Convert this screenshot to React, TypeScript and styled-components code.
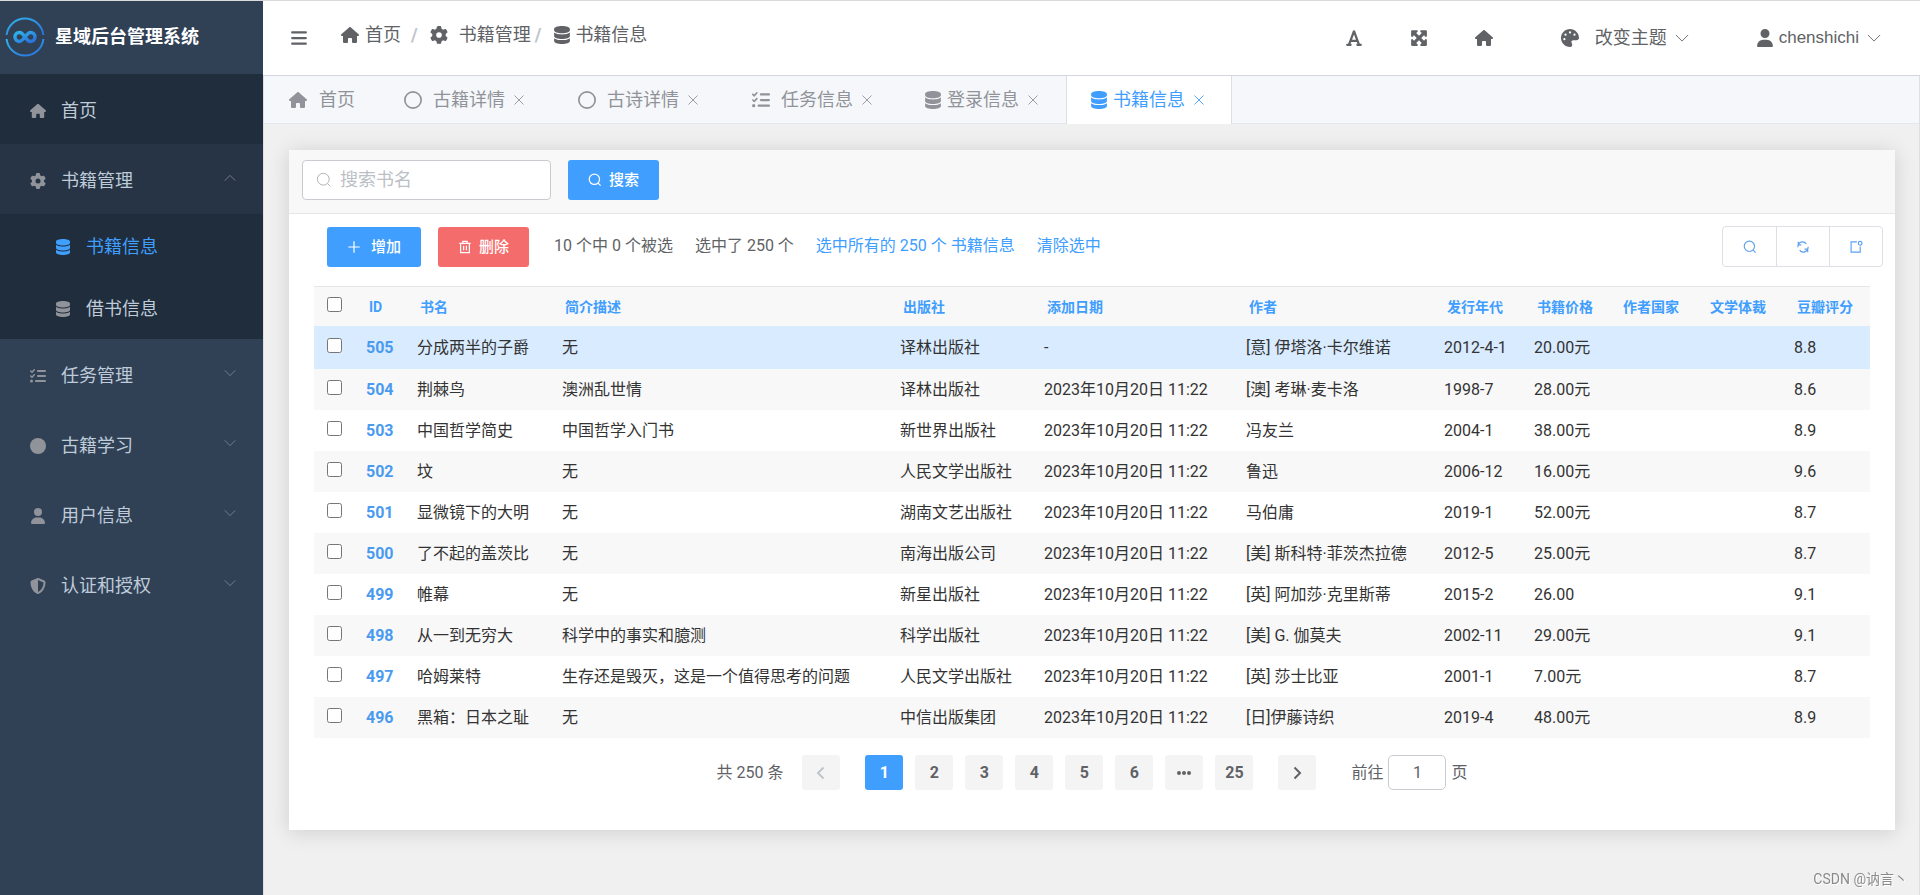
import React from "react";
import styled, { createGlobalStyle, css } from "styled-components";
import {
  FaHouse, FaGear, FaDatabase, FaListCheck, FaCircle, FaRegCircle, FaUser,
  FaShieldHalved, FaPalette, FaFont, FaMaximize, FaBars,
} from "react-icons/fa6";

const color = {
  primary: "#409eff",
  danger: "#f56c6c",
  text: "#606266",
  muted: "#909399",
  border: "#dcdfe6",
  line: "#e4e7ed",
};

const GlobalStyle = createGlobalStyle`
  *, *::before, *::after { box-sizing: border-box; }
  body {
    margin: 0;
    background: #f0f0f0;
    color: ${color.text};
    font-family: Roboto, "Noto Sans CJK SC", sans-serif;
    font-size: 16px;
    line-height: 24px;
  }
  button, input { font: inherit; color: inherit; margin: 0; }
  button { border: 0; background: none; padding: 0; cursor: pointer; }
  a { color: inherit; text-decoration: none; }
  ul, ol { list-style: none; margin: 0; padding: 0; }
`;

/* ---------- line icons ---------- */

const LineSvg = styled.svg<{ $size?: number }>`
  flex: none;
  width: ${(p) => p.$size ?? 14}px;
  height: ${(p) => p.$size ?? 14}px;
  fill: none;
  stroke: currentColor;
`;

const ICON_PATHS = {
  search: "M13.2 7.2a5.9 5.9 0 1 1-11.8 0a5.9 5.9 0 1 1 11.8 0zM11.6 11.6l2.8 2.8",
  plus: "M8 1.5v13M1.5 8h13",
  trash: "M1.5 3.8h13M5.5 3.6V1.5h5v2.1M3 3.8v10.7h10V3.8M6.4 6.6v5M9.6 6.6v5",
  refresh: "M2.2 8.2V7.6A5.3 5.3 0 0 1 11.8 4.4M13.8 7.8v.6A5.3 5.3 0 0 1 4.2 11.6M2.6 1.9v3.6h3.6M13.4 14.1v-3.6H9.8",
  share: "M9 2.2H2.4v11.6h10.4V7.4M14.8 3.7a2.1 2.1 0 1 1-4.2 0a2.1 2.1 0 1 1 4.2 0z",
  close: "M2 2l12 12M14 2L2 14",
  down: "M1 4.5l7 7l7-7",
  up: "M1 11.5l7-7l7 7",
  left: "M10.5 2.5L5 8l5.5 5.5",
  right: "M5.5 2.5L11 8l-5.5 5.5",
};

type LineIconProps = { name: keyof typeof ICON_PATHS; size?: number; weight?: number };
const LineIcon = ({ name, size, weight = 1 }: LineIconProps) => (
  <LineSvg viewBox="0 0 16 16" $size={size} strokeWidth={weight} aria-hidden="true">
    <path d={ICON_PATHS[name]} />
  </LineSvg>
);

const Glyph = styled.span<{ $width?: number; $size?: number }>`
  display: inline-flex;
  flex: none;
  justify-content: center;
  width: ${(p) => (p.$width ? `${p.$width}px` : "auto")};
  font-size: ${(p) => p.$size ?? 18}px;
  svg { width: auto; height: 1em; }
`;

/* ---------- shell ---------- */

const Shell = styled.div`
  display: flex;
  min-height: 100vh;
  border-top: 1px solid #d9dadc;
`;

const Sidebar = styled.aside`
  flex: none;
  width: 263px;
  background: #304156;
  color: #bfcbd9;
  font-size: 18px;
`;

const Brand = styled.div`
  display: flex;
  align-items: center;
  gap: 10px;
  height: 73px;
  padding: 0 0 2px 5px;
  color: #fff;
  font-weight: 700;
`;

const Logo = () => (
  <svg width="40" height="40" viewBox="0 0 40 40" fill="none" aria-hidden="true">
    <defs>
      <linearGradient id="brand" x1="0" y1="0" x2="1" y2="1">
        <stop offset="0" stopColor="#2fb4ea" />
        <stop offset="1" stopColor="#2b6fdc" />
      </linearGradient>
    </defs>
    <g stroke="url(#brand)">
      <path d="M1.6 18A18.5 18.5 0 0 1 38.400 18" strokeWidth="2" />
      <path d="M1.6 22A18.5 18.5 0 0 0 38.400 22" strokeWidth="2" />
      <path
        d="M20 20c-2-3-3.500-4.500-5.500-4.500a4.500 4.500 0 0 0 0 9c4 0 7-9 11-9a4.500 4.500 0 0 1 0 9c-2 0-3.500-1.500-5.500-4.500"
        strokeWidth="3.4"
        strokeLinecap="round"
      />
    </g>
  </svg>
);

const MenuLink = styled.a<{ $tone?: "dark" | "open" }>`
  display: flex;
  align-items: center;
  gap: 12px;
  height: 70px;
  padding: 3px 27px 0 26px;
  background: ${(p) => (p.$tone === "dark" ? "#1f2d3d" : p.$tone === "open" ? "#263445" : "none")};
`;

const MenuIcon = styled(Glyph)`
  color: ${color.muted};
`;

const MenuArrow = styled.span`
  display: flex;
  margin-left: auto;
  padding-bottom: 6px;
  color: ${color.muted};
`;

const SubMenu = styled.ul`
  padding-bottom: 1px;
  background: #1f2d3d;
`;

const SubLink = styled.a<{ $active?: boolean }>`
  display: flex;
  align-items: center;
  gap: 12px;
  height: 62px;
  padding: 4px 0 0 51px;
  color: ${(p) => (p.$active ? color.primary : "inherit")};
  ${MenuIcon} { color: ${(p) => (p.$active ? color.primary : color.muted)}; }
`;

const Main = styled.div`
  display: flex;
  flex: 1;
  flex-direction: column;
  min-width: 0;
`;

const TopBar = styled.header`
  display: flex;
  align-items: center;
  height: 75px;
  padding: 0 39px 0 27px;
  border-bottom: 1px solid #d3d6de;
  background: #fff;
  font-size: 18px;
`;

const Crumbs = styled.ol`
  display: flex;
  align-items: center;
  margin-left: 33px;
  padding-bottom: 6px;
`;

const Crumb = styled.li<{ $gap: number; $sep?: number }>`
  display: flex;
  align-items: center;
  a { display: flex; align-items: center; gap: ${(p) => p.$gap}px; }
  &:not(:last-child)::after {
    content: "/";
    margin: 0 12px 0 ${(p) => p.$sep ?? 4}px;
    color: #c0c4cc;
    font-weight: 700;
  }
`;

const TopActions = styled.div`
  display: flex;
  align-items: center;
  margin-left: auto;
`;

const IconButton = styled.button<{ $width?: number }>`
  display: flex;
  justify-content: center;
  align-items: center;
  width: ${(p) => (p.$width ? `${p.$width}px` : "auto")};
  height: 40px;
`;

const ThemeButton = styled.button`
  display: flex;
  align-items: center;
  gap: 8px;
  margin-left: 44px;
  ${Glyph} { margin-right: 8px; }
`;

const UserButton = styled.button`
  display: flex;
  align-items: center;
  gap: 8px;
  margin-left: 67px;
  font-family: "Liberation Sans", sans-serif;
  font-size: 17px;
  ${Glyph} { margin-right: -3px; }
`;

/* ---------- tabs ---------- */

const Frame = styled.div`
  flex: 1;
  border: solid ${color.border};
  border-width: 0 1px;
`;

const Tabs = styled.nav`
  display: flex;
  height: 48px;
  background: #f5f7fa;
  box-shadow: inset 0 -1px 0 ${color.line};
`;

const Tab = styled.div<{ $active?: boolean }>`
  display: flex;
  align-items: center;
  padding: 0 22px;
  border: solid transparent;
  border-width: 0 1px;
  color: ${color.muted};
  font-size: 18px;
  ${(p) =>
    p.$active &&
    css`
      border-color: ${color.border};
      background: #fff;
      color: ${color.primary};
    `}
`;

const TabLink = styled.a<{ $gap: number }>`
  display: flex;
  align-items: center;
  gap: ${(p) => p.$gap}px;
`;

const TabClose = styled.button`
  display: flex;
  margin-left: 8px;
  padding-right: 4px;
`;

/* ---------- card ---------- */

const Content = styled.main`
  padding: 26px 24px 64px 25px;
`;

const Card = styled.section`
  background: #fff;
  box-shadow: 0 2px 20px rgba(0, 0, 0, 0.14);
`;

const SearchBar = styled.form`
  display: flex;
  gap: 17px;
  height: 64px;
  padding: 10px 13px;
  border-bottom: 1px solid #e6e6e6;
  background: #f8f8f8;
`;

const SearchField = styled.label`
  display: flex;
  align-items: center;
  gap: 8px;
  width: 249px;
  height: 40px;
  padding: 0 13px;
  border: 1px solid #c8cbd0;
  border-radius: 4px;
  background: #fff;
  color: #b0b4bb;
  input {
    min-width: 0;
    flex: 1;
    padding: 0;
    border: 0;
    outline: 0;
    background: none;
    font-size: 18px;
  }
  input::placeholder { color: #bcbfc6; opacity: 1; }
`;

const Button = styled.button<{ $tone: "primary" | "danger"; $gap?: number }>`
  display: flex;
  align-items: center;
  gap: ${(p) => p.$gap ?? 7}px;
  height: 40px;
  padding: 0 20px;
  border-radius: 3px;
  background: ${(p) => color[p.$tone]};
  color: #fff;
  font-size: 15px;
  font-weight: 500;
`;

const Toolbar = styled.div`
  display: flex;
  align-items: center;
  padding: 12px 12px 19px 38px;
`;

const ToolButtons = styled.div`
  display: flex;
  gap: 17px;
  margin-right: 25px;
`;

const ToolTexts = styled.div`
  display: flex;
  gap: 22px;
  padding-bottom: 2px;
  a { color: ${color.primary}; }
`;

const ButtonGroup = styled.div`
  display: flex;
  margin-left: auto;
  border: 1px solid ${color.border};
  border-radius: 4px;
  color: #5b9fee;
  ${IconButton} { height: 39px; }
  ${IconButton} + ${IconButton} { border-left: 1px solid ${color.border}; }
`;

const TableWrap = styled.div`
  padding: 0 25px;
`;

const Table = styled.table`
  width: 100%;
  border-collapse: separate;
  border-spacing: 0;
  table-layout: fixed;
  color: #333;
  th, td { padding: 0 0 0 10px; text-align: left; white-space: nowrap; }
  th {
    height: 40px;
    padding-left: 13px;
    border-top: 1px solid #e6e6e6;
    background: #f8f8f8;
    color: ${color.primary};
    font-size: 14px;
    font-weight: 700;
  }
  th a { color: ${color.primary}; }
`;

const Row = styled.tr<{ $current?: boolean }>`
  height: ${(p) => (p.$current ? 43 : 41)}px;
  background: #fff;
  &:nth-child(even) { background: #f8f8f8; }
  &:first-child { background: ${(p) => (p.$current ? "#d9ebff" : "#fff")}; }
`;

const Check = styled.input`
  display: block;
  width: 15px;
  height: 15px;
  margin: 0 0 5px;
`;

const CheckCell = styled.td`
  && { padding-left: 13px; }
`;

const IdLink = styled.a`
  color: #4a9bf0;
  font-weight: 700;
`;

/* ---------- pagination ---------- */

const Pagination = styled.nav`
  display: flex;
  justify-content: center;
  align-items: center;
  padding: 17px 0 40px;
`;

const Pages = styled.div`
  display: flex;
  gap: 12px;
  margin: 0 25px;
`;

const PageButton = styled.button<{ $active?: boolean }>`
  display: flex;
  justify-content: center;
  align-items: center;
  width: 38px;
  height: 35px;
  border-radius: 3px;
  background: ${(p) => (p.$active ? color.primary : "#f4f4f5")};
  color: ${(p) => (p.$active ? "#fff" : color.text)};
  font-weight: 700;
  &:disabled { color: #c0c4cc; }
`;

const Total = styled.span`
  margin-right: 19px;
`;

const Jump = styled.label`
  display: flex;
  align-items: center;
  gap: 5px;
  margin-left: 35px;
  input {
    width: 58px;
    height: 35px;
    padding: 0;
    border: 1px solid #c8cbd0;
    border-radius: 5px;
    text-align: center;
    outline: 0;
  }
`;

const Watermark = styled.div`
  position: fixed;
  right: 12px;
  bottom: 6px;
  color: #8a8a8a;
  font-size: 14px;
  line-height: 20px;
  text-shadow: 1px 1px 0 #fff;
`;

/* ---------- data ---------- */

const MENU = [
  { icon: <FaListCheck />, label: "任务管理" },
  { icon: <FaCircle />, label: "古籍学习" },
  { icon: <FaUser />, label: "用户信息" },
  { icon: <FaShieldHalved />, label: "认证和授权" },
];

const TABS = [
  { icon: <FaHouse />, label: "首页", width: 21, gap: 11, fixed: true },
  { icon: <FaRegCircle />, label: "古籍详情", width: 23, gap: 9 },
  { icon: <FaRegCircle />, label: "古诗详情", width: 23, gap: 9 },
  { icon: <FaListCheck />, label: "任务信息", width: 23, gap: 9 },
  { icon: <FaDatabase />, label: "登录信息", width: 20, gap: 4 },
  { icon: <FaDatabase />, label: "书籍信息", width: 20, gap: 4, active: true },
];

const COLUMNS: { label: string; width?: number }[] = [
  { label: "ID", width: 51 },
  { label: "书名", width: 145 },
  { label: "简介描述" },
  { label: "出版社", width: 144 },
  { label: "添加日期", width: 202 },
  { label: "作者", width: 198 },
  { label: "发行年代", width: 90 },
  { label: "书籍价格", width: 86 },
  { label: "作者国家", width: 87 },
  { label: "文学体裁", width: 87 },
  { label: "豆瓣评分", width: 86 },
];

const ADDED = "2023年10月20日 11:22";
const BOOKS: string[][] = [
  ["505", "分成两半的子爵", "无", "译林出版社", "-", "[意] 伊塔洛·卡尔维诺", "2012-4-1", "20.00元", "8.8"],
  ["504", "荆棘鸟", "澳洲乱世情", "译林出版社", ADDED, "[澳] 考琳·麦卡洛", "1998-7", "28.00元", "8.6"],
  ["503", "中国哲学简史", "中国哲学入门书", "新世界出版社", ADDED, "冯友兰", "2004-1", "38.00元", "8.9"],
  ["502", "坟", "无", "人民文学出版社", ADDED, "鲁迅", "2006-12", "16.00元", "9.6"],
  ["501", "显微镜下的大明", "无", "湖南文艺出版社", ADDED, "马伯庸", "2019-1", "52.00元", "8.7"],
  ["500", "了不起的盖茨比", "无", "南海出版公司", ADDED, "[美] 斯科特·菲茨杰拉德", "2012-5", "25.00元", "8.7"],
  ["499", "帷幕", "无", "新星出版社", ADDED, "[英] 阿加莎·克里斯蒂", "2015-2", "26.00", "9.1"],
  ["498", "从一到无穷大", "科学中的事实和臆测", "科学出版社", ADDED, "[美] G. 伽莫夫", "2002-11", "29.00元", "9.1"],
  ["497", "哈姆莱特", "生存还是毁灭，这是一个值得思考的问题", "人民文学出版社", ADDED, "[英] 莎士比亚", "2001-1", "7.00元", "8.7"],
  ["496", "黑箱：日本之耻", "无", "中信出版集团", ADDED, "[日]伊藤诗织", "2019-4", "48.00元", "8.9"],
];

const SideNav = () => (
  <Sidebar>
    <Brand><Logo />星域后台管理系统</Brand>
    <nav>
      <MenuLink href="#home" $tone="dark">
        <MenuIcon $width={23} $size={16}><FaHouse /></MenuIcon>首页
      </MenuLink>
      <MenuLink href="#books" $tone="open">
        <MenuIcon $width={23} $size={16}><FaGear /></MenuIcon>书籍管理
        <MenuArrow><LineIcon name="up" size={12} /></MenuArrow>
      </MenuLink>
      <SubMenu>
        <li><SubLink href="#book-info" $active><MenuIcon $width={23} $size={16}><FaDatabase /></MenuIcon>书籍信息</SubLink></li>
        <li><SubLink href="#loans"><MenuIcon $width={23} $size={16}><FaDatabase /></MenuIcon>借书信息</SubLink></li>
      </SubMenu>
      {MENU.map((m) => (
        <MenuLink key={m.label} href="#menu">
          <MenuIcon $width={23} $size={16}>{m.icon}</MenuIcon>{m.label}
          <MenuArrow><LineIcon name="down" size={12} /></MenuArrow>
        </MenuLink>
      ))}
    </nav>
  </Sidebar>
);

const Header = () => (
  <TopBar>
    <IconButton aria-label="折叠菜单"><Glyph><FaBars /></Glyph></IconButton>
    <Crumbs>
      <Crumb $gap={6} $sep={10}><a href="#home"><Glyph><FaHouse /></Glyph>首页</a></Crumb>
      <Crumb $gap={11}><a href="#books"><Glyph><FaGear /></Glyph>书籍管理</a></Crumb>
      <Crumb $gap={4}><a href="#book-info"><Glyph><FaDatabase /></Glyph>书籍信息</a></Crumb>
    </Crumbs>
    <TopActions>
      <IconButton $width={65} aria-label="字体大小"><Glyph><FaFont /></Glyph></IconButton>
      <IconButton $width={65} aria-label="全屏"><Glyph><FaMaximize /></Glyph></IconButton>
      <IconButton $width={65} aria-label="首页"><Glyph><FaHouse /></Glyph></IconButton>
      <ThemeButton><Glyph><FaPalette /></Glyph>改变主题<LineIcon name="down" /></ThemeButton>
      <UserButton><Glyph><FaUser /></Glyph>chenshichi<LineIcon name="down" /></UserButton>
    </TopActions>
  </TopBar>
);

const BookTable = () => (
  <Table>
    <colgroup>
      <col width={42} />
      {COLUMNS.map((c) => <col key={c.label} width={c.width} />)}
    </colgroup>
    <thead>
      <tr>
        <th><Check type="checkbox" aria-label="全选" /></th>
        {COLUMNS.map((c) => <th key={c.label} scope="col"><a href="#sort">{c.label}</a></th>)}
      </tr>
    </thead>
    <tbody>
      {BOOKS.map(([id, title, intro, press, date, author, year, price, score], i) => (
        <Row key={id} $current={i === 0}>
          <CheckCell><Check type="checkbox" aria-label={title} /></CheckCell>
          <td><IdLink href="#book">{id}</IdLink></td>
          <td>{title}</td>
          <td>{intro}</td>
          <td>{press}</td>
          <td>{date}</td>
          <td>{author}</td>
          <td>{year}</td>
          <td>{price}</td>
          <td />
          <td />
          <td>{score}</td>
        </Row>
      ))}
    </tbody>
  </Table>
);

const Pager = () => (
  <Pagination aria-label="分页">
    <Total>共 250 条</Total>
    <PageButton disabled aria-label="上一页"><LineIcon name="left" size={16} weight={2} /></PageButton>
    <Pages>
      {["1", "2", "3", "4", "5", "6", "more", "25"].map((p) => (
        <PageButton key={p} $active={p === "1"}>
          {p === "more" ? (
            <svg width="14" height="4" viewBox="0 0 14 4" fill="currentColor" aria-hidden="true">
              <circle cx="2" cy="2" r="2" /><circle cx="7" cy="2" r="2" /><circle cx="12" cy="2" r="2" />
            </svg>
          ) : p}
        </PageButton>
      ))}
    </Pages>
    <PageButton aria-label="下一页"><LineIcon name="right" size={16} weight={2} /></PageButton>
    <Jump>前往<input type="text" defaultValue="1" />页</Jump>
  </Pagination>
);

export default function App() {
  return (
    <>
      <GlobalStyle />
      <Shell>
        <SideNav />
        <Main>
          <Header />
          <Frame>
            <Tabs>
              {TABS.map((t) => (
                <Tab key={t.label} $active={t.active}>
                  <TabLink href="#tab" $gap={t.gap}><Glyph $width={t.width}>{t.icon}</Glyph>{t.label}</TabLink>
                  {!t.fixed && <TabClose aria-label="关闭"><LineIcon name="close" size={12} weight={1.2} /></TabClose>}
                </Tab>
              ))}
            </Tabs>
            <Content>
              <Card>
                <SearchBar>
                  <SearchField>
                    <LineIcon name="search" size={16} />
                    <input type="text" placeholder="搜索书名" aria-label="搜索书名" />
                  </SearchField>
                  <Button type="button" $tone="primary"><LineIcon name="search" weight={1.4} />搜索</Button>
                </SearchBar>
                <Toolbar>
                  <ToolButtons>
                    <Button $tone="primary" $gap={10}><LineIcon name="plus" weight={1.4} />增加</Button>
                    <Button $tone="danger"><LineIcon name="trash" weight={1.4} />删除</Button>
                  </ToolButtons>
                  <ToolTexts>
                    <span>10 个中 0 个被选</span>
                    <span>选中了 250 个</span>
                    <a href="#all">选中所有的 250 个 书籍信息</a>
                    <a href="#clear">清除选中</a>
                  </ToolTexts>
                  <ButtonGroup>
                    <IconButton $width={53} aria-label="搜索"><LineIcon name="search" weight={1.3} /></IconButton>
                    <IconButton $width={53} aria-label="刷新"><LineIcon name="refresh" weight={1.3} /></IconButton>
                    <IconButton $width={53} aria-label="导出"><LineIcon name="share" weight={1.3} /></IconButton>
                  </ButtonGroup>
                </Toolbar>
                <TableWrap><BookTable /></TableWrap>
                <Pager />
              </Card>
            </Content>
          </Frame>
        </Main>
      </Shell>
      <Watermark>CSDN @讷言丶</Watermark>
    </>
  );
}
